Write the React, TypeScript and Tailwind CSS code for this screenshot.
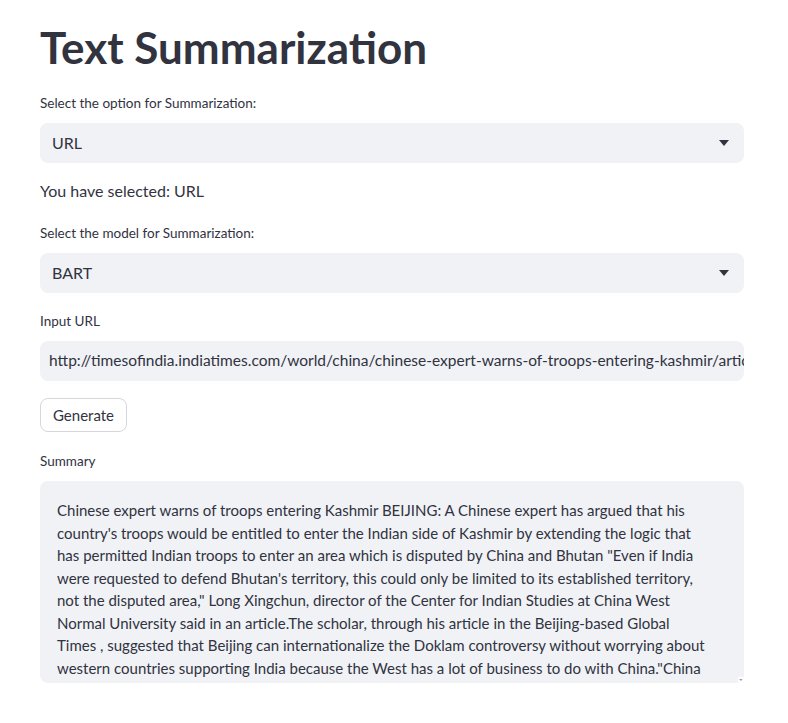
const SUMMARY_LINES = [
  "Chinese expert warns of troops entering Kashmir BEIJING: A Chinese expert has argued that his",
  "country's troops would be entitled to enter the Indian side of Kashmir by extending the logic that",
  "has permitted Indian troops to enter an area which is disputed by China and Bhutan \"Even if India",
  "were requested to defend Bhutan's territory, this could only be limited to its established territory,",
  "not the disputed area,\" Long Xingchun, director of the Center for Indian Studies at China West",
  "Normal University said in an article.The scholar, through his article in the Beijing-based Global",
  "Times , suggested that Beijing can internationalize the Doklam controversy without worrying about",
  "western countries supporting India because the West has a lot of business to do with China.\"China",
];

function Caret() {
  return (
    <svg width="10" height="6" viewBox="0 0 10 6" className="shrink-0">
      <path d="M0 0 L10 0 L5 6 Z" fill="#31333F" />
    </svg>
  );
}

function Label({ text, className = "" }: { text: string; className?: string }) {
  return <p className={`h-5 text-[13.5px] leading-5 text-[#31333F] ${className}`}>{text}</p>;
}

function SelectBox({ value }: { value: string }) {
  return (
    <div className="mt-[10px] flex h-10 items-center justify-between rounded-lg bg-[#F0F2F6] pl-3 pr-[15px] text-[16px] text-[#31333F]">
      <span>{value}</span>
      <Caret />
    </div>
  );
}

export default function App() {
  return (
    <div className="min-h-screen w-full bg-white" style={{ fontFamily: "Lato, 'Liberation Sans', sans-serif" }}>
      <div className="ml-10 flex w-[704px] flex-col pt-[21px]">
        <h1 className="h-[52px] text-[44px] font-bold leading-[52px] text-[#31333F]">
          Text Summarization
        </h1>

        <Label text="Select the option for Summarization:" className="mt-5" />
        <SelectBox value="URL" />

        <p className="mt-4 h-6 text-[16px] leading-6 text-[#31333F]">You have selected: URL</p>

        <Label text="Select the model for Summarization:" className="mt-5" />
        <SelectBox value="BART" />

        <Label text="Input URL" className="mt-[18px]" />
        <div className="mt-[10px] flex h-10 items-center overflow-hidden rounded-lg bg-[#F0F2F6] px-[9px] text-[15.5px] text-[#31333F]">
          <span className="whitespace-nowrap">
            http://timesofindia.indiatimes.com/world/china/chinese-expert-warns-of-troops-entering-kashmir/articleshow/59823765.cms
          </span>
        </div>

        <div className="mt-[17px]">
          <button className="h-[34px] rounded-lg border border-[#D5D7DD] bg-white px-3 text-[15px] text-[#31333F]">
            Generate
          </button>
        </div>

        <Label text="Summary" className="mt-[19px]" />
        <div className="relative mt-[10px] h-[202px] overflow-hidden rounded-lg bg-[#F0F2F6] pl-[17px] pr-4 pt-[18px] text-[15px] leading-[22.5px] text-[#31333F]">
          {SUMMARY_LINES.map((line, i) => (
            <div key={i} className="whitespace-nowrap">
              {line}
            </div>
          ))}
          <div className="absolute bottom-0 right-0 h-[6px] w-[6px] bg-white">
            <svg width="6" height="6" viewBox="0 0 6 6">
              <path d="M1 2 L5 2 L3 4 Z" fill="#9aa0a6" />
            </svg>
          </div>
        </div>
      </div>
    </div>
  );
}
